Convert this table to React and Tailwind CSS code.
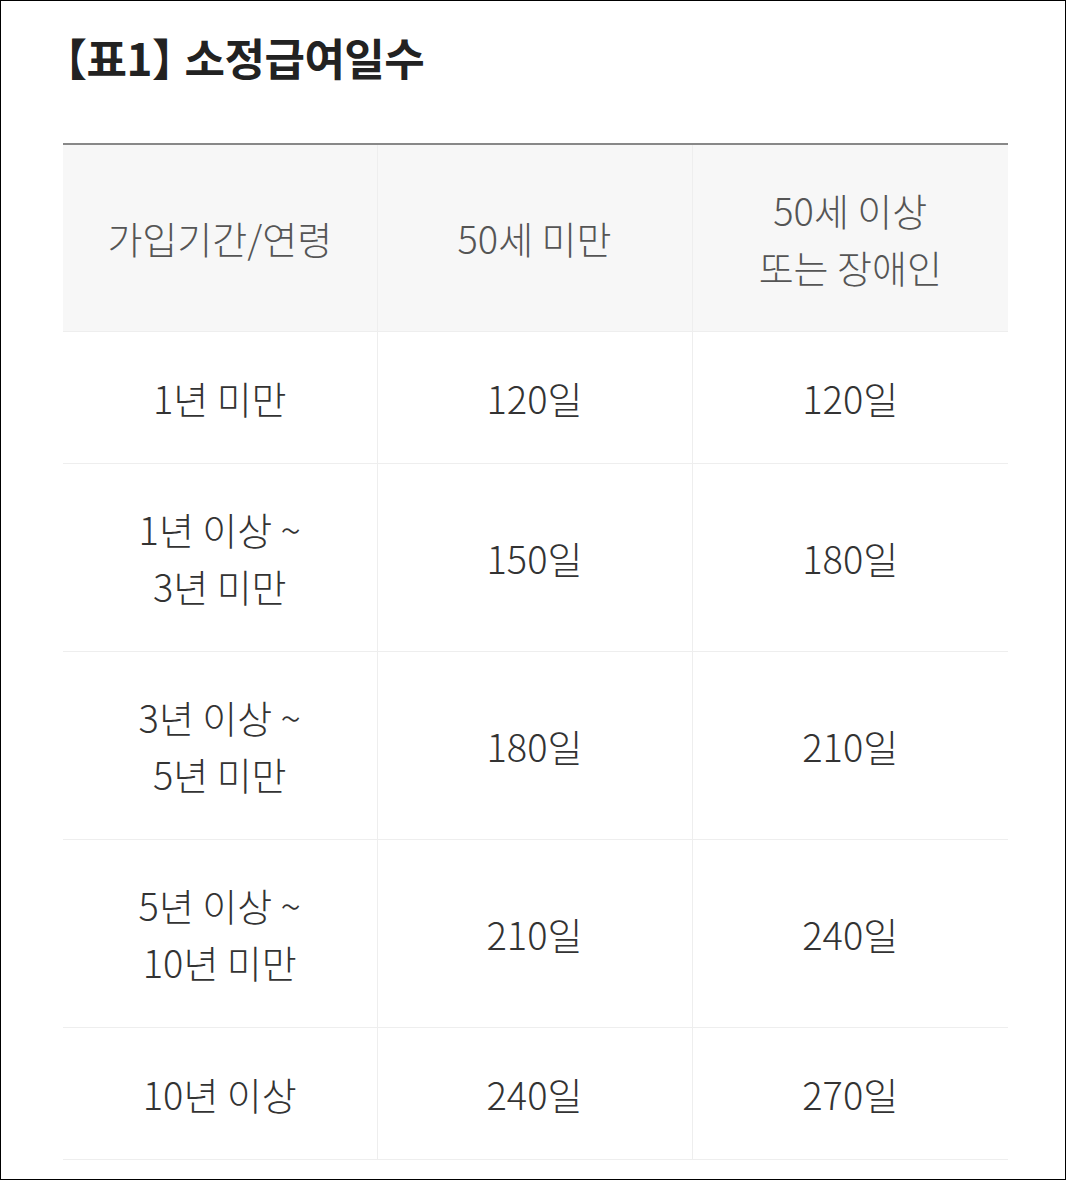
import React from "react";

const rows = [
  { period: ["1년 미만"], under50: "120일", over50: "120일" },
  { period: ["1년 이상 ~", "3년 미만"], under50: "150일", over50: "180일" },
  { period: ["3년 이상 ~", "5년 미만"], under50: "180일", over50: "210일" },
  { period: ["5년 이상 ~", "10년 미만"], under50: "210일", over50: "240일" },
  { period: ["10년 이상"], under50: "240일", over50: "270일" },
];

const font = { fontFamily: '"Noto Sans CJK KR", "Noto Sans", sans-serif' };

const App = () => {
  return (
    <div
      className="w-[1066px] h-[1180px] border border-black bg-white pl-[62px] pt-[26px]"
      style={font}
    >
      {/* Title */}
      <h2 className="text-[44px] leading-[60px] font-bold text-[#222] tracking-[-0.5px] whitespace-nowrap">
        <span className="-ml-[20px]">【</span>표1<span className="mr-[-11px]">】</span>소정급여일수
      </h2>

      {/* Table */}
      <table className="mt-[56px] w-[945px] border-collapse table-fixed text-[38px] leading-[57px] font-light text-center">
        <colgroup>
          <col className="w-[314px]" />
          <col className="w-[315px]" />
          <col className="w-[316px]" />
        </colgroup>
        <thead>
          <tr className="bg-[#f7f7f7] text-[#555] border-t-2 border-[#888] h-[187px]">
            <th className="font-light border-r border-b border-[#eee]">가입기간/연령</th>
            <th className="font-light border-r border-b border-[#eee]">50세 미만</th>
            <th className="font-light border-b border-[#eee]">
              50세 이상
              <br />
              또는 장애인
            </th>
          </tr>
        </thead>
        <tbody className="text-[#333]">
          {rows.map((row, i) => (
            <tr
              key={i}
              className={row.period.length > 1 ? "h-[188px]" : "h-[132px]"}
            >
              <td className="border-r border-b border-[#eee]">
                {row.period.map((line, j) => (
                  <div key={j}>{line}</div>
                ))}
              </td>
              <td className="border-r border-b border-[#eee]">{row.under50}</td>
              <td className="border-b border-[#eee]">{row.over50}</td>
            </tr>
          ))}
        </tbody>
      </table>
    </div>
  );
};

export default App;
